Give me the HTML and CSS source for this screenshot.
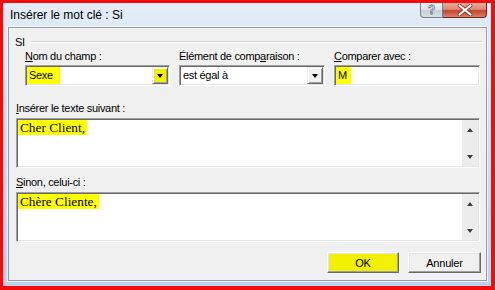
FILE: index.html
```html
<!DOCTYPE html>
<html lang="fr">
<head>
    <meta charset="UTF-8">
    <title>Insérer le mot clé : Si</title>
    <link rel="stylesheet" href="styles.css">
</head>
<body>
    <div class="window">
        <div class="titlebar">
            <span class="title">Insérer le mot clé : Si</span>
            <div class="caption">
                <span class="cap-help">?</span>
                <span class="cap-close">
                    <svg width="18" height="12" viewBox="0 0 18 12">
                        <path d="M3.5 1.5 L14.5 10.5 M14.5 1.5 L3.5 10.5" stroke="#7a3426" stroke-width="3.6" stroke-linecap="round"/>
                        <path d="M3.5 1.5 L14.5 10.5 M14.5 1.5 L3.5 10.5" stroke="#fff" stroke-width="2.2" stroke-linecap="round"/>
                    </svg>
                </span>
            </div>
        </div>

        <div class="client">
            <div class="group-head">
                <span>SI</span>
                <span class="group-line"></span>
            </div>

            <div class="fields">
                <div class="field">
                    <label><u>N</u>om du champ :</label>
                    <div class="combo sunken">
                        <span class="combo-text"><span class="hl sel">Sexe</span></span>
                        <span class="drop hl-btn"><i class="arrow-down"></i></span>
                    </div>
                </div>
                <div class="field">
                    <label>Élément de comp<u>a</u>raison :</label>
                    <div class="combo sunken">
                        <span class="combo-text plain">est égal à</span>
                        <span class="drop"><i class="arrow-down"></i></span>
                    </div>
                </div>
                <div class="field">
                    <label><u>C</u>omparer avec :</label>
                    <div class="combo sunken">
                        <span class="combo-text"><span class="hl mark">M</span></span>
                    </div>
                </div>
            </div>

            <label class="block-label"><u>I</u>nsérer le texte suivant :</label>
            <div class="memo sunken">
                <div class="memo-text"><span class="hl">Cher Client,</span></div>
                <div class="scroll"><i class="arrow-up"></i><i class="arrow-down small"></i></div>
            </div>

            <label class="block-label second"><u>S</u>inon, celui-ci :</label>
            <div class="memo sunken">
                <div class="memo-text"><span class="hl">Chère Cliente,</span></div>
                <div class="scroll"><i class="arrow-up"></i><i class="arrow-down small"></i></div>
            </div>

            <div class="actions">
                <button class="btn btn-ok">OK</button>
                <button class="btn">Annuler</button>
            </div>
        </div>
    </div>
</body>
</html>
```

FILE: styles.css
```css
/* reset */
* {
    margin: 0;
    padding: 0;
    box-sizing: border-box;
}

body {
    width: 495px;
    height: 290px;
    overflow: hidden;
    background: #f20d0d;
    padding: 3px 4px 4px 3px;
    font-family: "Liberation Sans", Arial, sans-serif;
    font-size: 11px;
    letter-spacing: -0.3px;
    color: #000;
}

/* fenêtre Aero */
.window {
    height: 283px;
    padding: 0 4px 5px 5px;
    display: flex;
    flex-direction: column;
    background: linear-gradient(#e3ecf7, #d4e2f2 40%, #bcd2ec);
}

.titlebar {
    height: 24px;
    display: flex;
    justify-content: space-between;
    align-items: flex-start;
}

.title {
    font-size: 12px;
    letter-spacing: 0;
    padding: 5px 0 0 2px;
    color: #000;
}

.caption {
    display: flex;
}

.cap-help,
.cap-close {
    height: 15px;
    display: flex;
    align-items: center;
    justify-content: center;
}

.cap-help {
    width: 23px;
    border: 1px solid #76818f;
    border-top: none;
    border-radius: 0 0 0 4px;
    background: linear-gradient(#f3f6f9, #dde3ea 45%, #c7d0da 55%, #d7dee6);
    font-weight: bold;
    font-size: 12px;
    color: #fff;
    -webkit-text-stroke: 0.8px #6f7b8a;
}

.cap-close {
    width: 44px;
    border: 1px solid #6b2a1f;
    border-top: none;
    border-left: none;
    border-radius: 0 0 4px 0;
    background: linear-gradient(#e9ad9e, #d98a74 45%, #c4442c 55%, #d7826a);
}

.client {
    flex: 1;
    background: #f0f0f0;
    border: 1px solid #8f9db0;
    box-shadow: 0 0 0 1px rgba(255, 255, 255, 0.7);
    display: flex;
    flex-direction: column;
}

/* groupe SI */
.group-head {
    height: 14px;
    margin: 7px 4px 0 6px;
    display: flex;
    align-items: center;
}

.group-line {
    flex: 1;
    margin-left: 6px;
    border-top: 1px solid #d5d5d5;
    border-bottom: 1px solid #fff;
}

.fields {
    display: grid;
    grid-template-columns: 145px 146px 146px;
    column-gap: 9px;
    margin-left: 16px;
}

label {
    display: block;
    line-height: 15px;
}

.sunken {
    background: #fff;
    border: 1px solid;
    border-color: #a0a0a0 #fff #fff #a0a0a0;
    box-shadow: inset 1px 1px 0 #696969, inset -1px -1px 0 #e3e3e3;
    padding: 1px;
}

.combo {
    height: 21px;
    margin-top: 1px;
    display: flex;
}

.combo-text {
    flex: 1;
    line-height: 17px;
}

.combo-text.plain {
    padding-left: 2px;
}

.hl {
    background: #ffff00;
}

.hl.sel {
    display: inline-block;
    width: 33px;
    padding-left: 2px;
}

.hl.mark {
    display: inline-block;
    padding: 0 4px 0 2px;
}

.drop {
    width: 16px;
    height: 17px;
    display: flex;
    align-items: center;
    justify-content: center;
    background: #f0f0f0;
    border: 1px solid;
    border-color: #f0f0f0 #696969 #696969 #f0f0f0;
    box-shadow: inset 1px 1px 0 #fff, inset -1px -1px 0 #a0a0a0;
}

.drop.hl-btn {
    background: #f2f200;
}

.arrow-down,
.arrow-up {
    display: block;
    width: 0;
    height: 0;
    border-left: 3.5px solid transparent;
    border-right: 3.5px solid transparent;
}

.arrow-down {
    border-top: 4px solid #000;
}

.arrow-up {
    border-bottom: 4px solid #3c3c3c;
}

.arrow-down.small {
    border-top-color: #3c3c3c;
}

/* zones de texte */
.block-label {
    margin: 15px 0 0 7px;
}

.block-label.second {
    margin-top: 7px;
}

.memo {
    height: 50px;
    margin: 2px 6px 0 7px;
    display: flex;
}

.memo-text {
    flex: 1;
    font-family: "Liberation Serif", "Times New Roman", serif;
    font-size: 13.3px;
    letter-spacing: 0;
    line-height: 15px;
}

.memo-text .hl {
    padding: 0 2px;
}

.scroll {
    width: 16px;
    background: #ececec;
    display: flex;
    flex-direction: column;
    align-items: center;
    justify-content: space-between;
    padding: 8px 0 7px;
}

/* boutons */
.actions {
    margin: 10px 5px 0 0;
    display: flex;
    justify-content: flex-end;
    gap: 9px;
}

.btn {
    width: 73px;
    height: 21px;
    font-family: inherit;
    font-size: 11px;
    letter-spacing: -0.2px;
    color: #000;
    background: #f0f0f0;
    border: 1px solid;
    border-color: #fff #696969 #696969 #fff;
    box-shadow: inset -1px -1px 0 #a0a0a0, inset 1px 1px 0 #e3e3e3;
}

.btn-ok {
    width: 72px;
    background: #f0f000;
}
```
